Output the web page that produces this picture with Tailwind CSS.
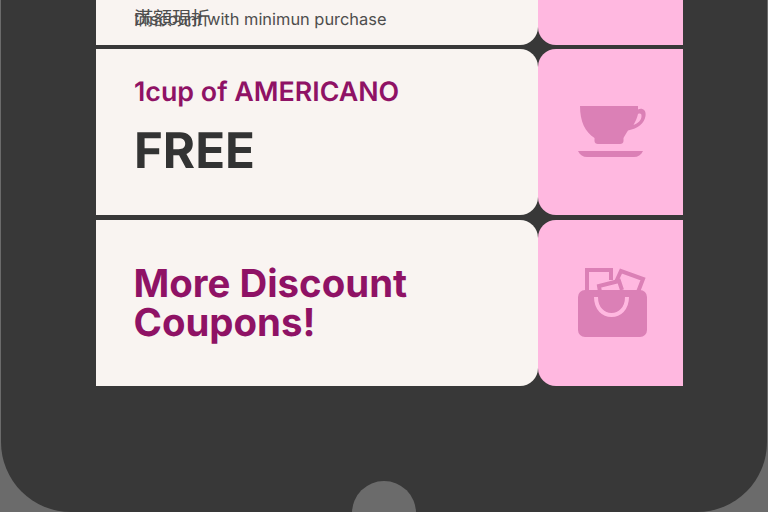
<!DOCTYPE html>
<html lang="en">
<head>
    <meta charset="UTF-8">
    <meta name="viewport" content="width=device-width, initial-scale=1.0">
    <title>Coupons</title>
    <script src="https://cdn.jsdelivr.net/npm/@tailwindcss/browser@4"></script>
</head>
<body class="bg-[#6b6b6b] font-['Inter','Noto_Sans_CJK_TC',sans-serif] [text-rendering:geometricPrecision]">
    <div class="relative w-[768px] h-[512px] overflow-hidden">
        <!-- Phone body -->
        <div class="mx-px w-[766px] h-[512px] bg-[#383838] rounded-b-[70px] overflow-hidden flex flex-col items-start pl-[95px] gap-[4.3px]">

            <!-- Discount coupon (scrolled off the top) -->
            <div class="flex shrink-0 mt-[-121px] h-[166px]">
                <div class="relative w-[442px] h-full bg-[#f9f4f1] rounded-r-[18px]">
                    <p class="absolute left-[38px] top-[130px] text-[16.400px] leading-5 text-[#4d4d4d] whitespace-nowrap">Discount with minimun purchase</p>
                    <p class="absolute left-[38px] top-[129.500px] text-[19px] leading-5 text-[#4d4d4d] whitespace-nowrap">滿額現折</p>
                </div>
                <div class="w-[145px] h-full bg-[#ffb8e0] rounded-l-[18px]"></div>
            </div>

            <!-- Americano coupon -->
            <div class="flex shrink-0 h-[166px]">
                <div class="w-[442px] h-full bg-[#f9f4f1] rounded-r-[18px] pl-[38px] pt-[26px]">
                    <p class="text-[26.800px] leading-[34px] font-semibold text-[#8f1265]">1cup of AMERICANO</p>
                    <p class="mt-[11px] text-[49.200px] leading-[60px] font-bold text-[#333333]">FREE</p>
                </div>
                <div class="w-[145px] h-full bg-[#ffb8e0] rounded-l-[18px] flex items-center justify-center">
                    <svg class="ml-[5px] mt-[2px] w-[70px] h-[54px]" viewBox="0 0 70 54" fill="#db80b6">
                        <path d="M2 0H60V3.500C64 1.500 68.500 4 67.500 10C66.500 17 60 22.500 50 24.500C48 28 46.500 30 45.500 32V35C45.500 37 44 38 42 38H20C18 38 16.500 37 16.500 35V32C7 26 2 15 2 0ZM60 8C59 12 57.500 15.500 55.500 19C60 17.500 63.500 14 63.500 10C63.500 7.500 62 7 60 8Z" fill-rule="evenodd"/>
                        <path d="M0 45H65C63 49 60 51 56 51H9C5 51 2 49 0 45Z"/>
                    </svg>
                </div>
            </div>

            <!-- More coupons -->
            <div class="flex shrink-0 h-[166px]">
                <div class="w-[442px] h-full bg-[#f9f4f1] rounded-r-[18px] pl-[37.500px] pt-[2px] flex items-center">
                    <p class="text-[38.400px] leading-[39px] font-bold text-[#8f1265]">More Discount<br>Coupons!</p>
                </div>
                <div class="w-[145px] h-full bg-[#ffb8e0] rounded-l-[18px] flex items-center justify-center">
                    <svg class="ml-[5px] w-[70px] h-[70px]" viewBox="0 0 70 70">
                        <path d="M9 24V2H33V12" fill="none" stroke="#db80b6" stroke-width="4"/>
                        <path d="M38 14L43 3L65 11L60 24" fill="none" stroke="#db80b6" stroke-width="4"/>
                        <path d="M22 24L21 18L41 13L44 22" fill="none" stroke="#db80b6" stroke-width="4"/>
                        <rect x="0" y="22" width="69" height="47" rx="7" fill="#db80b6"/>
                        <path d="M18 29C18 53 49 53 49 29" fill="none" stroke="#ffb8e0" stroke-width="4"/>
                    </svg>
                </div>
            </div>
        </div>

        <!-- Home button -->
        <div class="absolute left-[352px] top-[481px] w-16 h-16 rounded-full bg-[#6b6b6b]"></div>
    </div>
</body>
</html>
